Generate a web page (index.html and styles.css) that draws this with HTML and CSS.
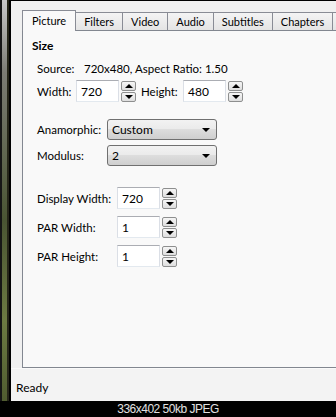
FILE: index.html
```html
<!DOCTYPE html>
<html>
<head>
<meta charset="UTF-8">
<title>Picture Settings</title>
<link rel="stylesheet" href="styles.css">
</head>
<body>
<div class="shot">
  <div class="desk"></div>
  <div class="win">
    <div class="tabbox">
      <div class="tabs">
        <div class="tab tab-on">Picture</div>
        <div class="tab">Filters</div>
        <div class="tab">Video</div>
        <div class="tab">Audio</div>
        <div class="tab">Subtitles</div>
        <div class="tab">Chapters</div>
        <div class="tab">Advanced</div>
      </div>
      <div class="panel">
        <div class="head">Size</div>
        <div class="group">
          <div class="source"><span class="src-lbl">Source:</span>720x480, Aspect Ratio: 1.50</div>

          <div class="row row-size">
            <span class="lbl lbl-width">Width:</span>
            <span class="box">720</span>
            <span class="spin"><span class="sbtn"><i class="up"></i></span><span class="sbtn"><i class="dn"></i></span></span>
            <span class="lbl lbl-height">Height:</span>
            <span class="box">480</span>
            <span class="spin"><span class="sbtn"><i class="up"></i></span><span class="sbtn"><i class="dn"></i></span></span>
          </div>

          <div class="row row-anam">
            <span class="lbl lbl-combo">Anamorphic:</span>
            <span class="combo">Custom<i class="dn"></i></span>
          </div>
          <div class="row row-mod">
            <span class="lbl lbl-combo">Modulus:</span>
            <span class="combo">2<i class="dn"></i></span>
          </div>

          <div class="row row-disp">
            <span class="lbl lbl-par">Display Width:</span>
            <span class="box">720</span>
            <span class="spin"><span class="sbtn"><i class="up"></i></span><span class="sbtn"><i class="dn"></i></span></span>
          </div>
          <div class="row row-par">
            <span class="lbl lbl-par">PAR Width:</span>
            <span class="box">1</span>
            <span class="spin"><span class="sbtn"><i class="up"></i></span><span class="sbtn"><i class="dn"></i></span></span>
          </div>
          <div class="row row-par">
            <span class="lbl lbl-par">PAR Height:</span>
            <span class="box">1</span>
            <span class="spin"><span class="sbtn"><i class="up"></i></span><span class="sbtn"><i class="dn"></i></span></span>
          </div>
        </div>
      </div>
    </div>
    <div class="status">Ready</div>
  </div>
</div>
<div class="caption">336x402 50kb JPEG</div>
</body>
</html>
```

FILE: styles.css
```css
body {
    margin: 0;
    width: 336px;
    height: 417px;
    overflow: hidden;
    font-family: Lato, "Liberation Sans", sans-serif;
    font-size: 11.5px;
    color: #000;
    background: #000;
}

.shot {
    display: flex;
    height: 401px;
}

/* bit of desktop wallpaper on the left */
.desk {
    width: 9px;
    flex: none;
    background:
        linear-gradient(to right, #161616 0 2px, transparent 2px 7px, #262619 7px),
        linear-gradient(#c8c8c8, #7c7c74 18%, #4a5533 55%, #6c7a42 80%, #505c30);
}

.win {
    flex: 1;
    min-width: 0;
    display: flex;
    flex-direction: column;
    background: #f0f0f0;
    border-top: 1px solid #000;
    border-left: 2px solid #000;
    overflow: hidden;
}

.tabbox {
    padding: 9px 0 0 11px;
}

.tabs {
    display: flex;
    align-items: flex-end;
    height: 21px;
    white-space: nowrap;
    font-size: 11px;
}

.tab {
    flex: none;
    height: 18px;
    line-height: 17px;
    margin-bottom: 1px;
    margin-left: -1px;
    padding: 0 8px;
    border: 1px solid #898c95;
    border-bottom: none;
    box-sizing: border-box;
    background: linear-gradient(#f4f4f4, #e4e4e4);
}

.tab-on {
    height: 21px;
    line-height: 20px;
    margin: 0;
    padding: 0 9px;
    background: #f9f9f9;
    position: relative;
    z-index: 1;
}

.panel {
    margin-top: -1px;
    width: 340px;
    height: 338px;
    box-sizing: border-box;
    border: 1px solid #828790;
    background: #f9f9f9;
    padding: 7px 0 0 9px;
}

.head {
    font-weight: bold;
    font-size: 12px;
    line-height: 16px;
}

.group {
    padding-left: 5px;
}

.source {
    margin-top: 7px;
    line-height: 16px;
}

.src-lbl {
    display: inline-block;
    width: 47px;
}

.row {
    display: flex;
    align-items: center;
    height: 22px;
}

.row-size { margin-top: 3px; }
.row-anam { margin-top: 17px; height: 21px; }
.row-mod { margin-top: 5px; height: 21px; }
.row-disp { margin-top: 21px; }
.row-par { margin-top: 7px; }

.lbl { flex: none; }
.lbl-width { width: 39px; }
.lbl-height { width: 42px; margin-left: 5px; }
.lbl-combo { width: 70px; }
.lbl-par { width: 80px; }

.box {
    width: 43px;
    height: 22px;
    line-height: 21px;
    box-sizing: border-box;
    padding-left: 4px;
    font-size: 12px;
    background: #fff;
    border: 1px solid #dbdfe6;
    border-top-color: #abadb3;
    border-bottom-color: #e3e9ef;
}

.spin {
    display: flex;
    flex-direction: column;
    gap: 1px;
    margin-left: 2px;
    width: 15px;
}

.sbtn {
    height: 10px;
    box-sizing: border-box;
    border: 1px solid #8e8f8f;
    border-radius: 2px;
    background: linear-gradient(#f6f6f6, #dedede);
    display: flex;
    align-items: center;
    justify-content: center;
}

.up {
    width: 0;
    height: 0;
    border-left: 4px solid transparent;
    border-right: 4px solid transparent;
    border-bottom: 4px solid #000;
}

.dn {
    width: 0;
    height: 0;
    border-left: 4px solid transparent;
    border-right: 4px solid transparent;
    border-top: 4px solid #000;
}

.combo {
    width: 110px;
    height: 21px;
    box-sizing: border-box;
    display: flex;
    align-items: center;
    justify-content: space-between;
    padding: 0 6px 0 4px;
    font-size: 12px;
    border: 1px solid #707070;
    border-radius: 3px;
    background: linear-gradient(#f2f2f2, #ebebeb 45%, #dddddd 50%, #cfcfcf);
}

.status {
    flex: 1;
    padding: 11px 0 0 5px;
    line-height: 16px;
    font-size: 12px;
    background: #f3f3f3;
    border-top: 1px solid #fafafa;
}

.caption {
    height: 16px;
    line-height: 16px;
    text-align: center;
    color: #e2e2e2;
    font-family: "Liberation Sans", Arial, sans-serif;
    font-size: 12px;
    letter-spacing: -0.5px;
}
```
